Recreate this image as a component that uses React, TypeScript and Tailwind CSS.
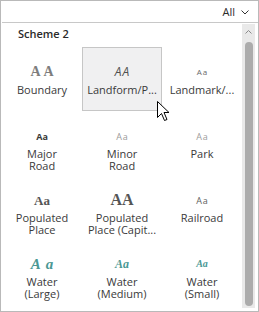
import React from "react";

type Item = {
  sample: string;
  cls: string;
  label: string[];
  hl?: boolean;
};

const serif = "font-['Liberation_Serif',serif]";
const sans = "font-['Open_Sans',sans-serif]";

const items: Item[] = [
  { sample: "AA", cls: `${serif} font-bold text-[14px] text-[#7d7d7d] tracking-[3px] pl-[3px]`, label: ["Boundary"] },
  { sample: "AA", cls: `${sans} italic text-[12px] text-[#505050] tracking-[1px] pl-[1px]`, label: ["Landform/P..."], hl: true },
  { sample: "Aa", cls: `${sans} text-[8px] text-[#6a6a6a] tracking-[1px] pl-[1px]`, label: ["Landmark/..."] },
  { sample: "Aa", cls: `${sans} font-bold text-[9px] text-[#3a3a3a]`, label: ["Major", "Road"] },
  { sample: "Aa", cls: `${sans} text-[9px] text-[#9a9a9a] tracking-[1px] pl-[1px]`, label: ["Minor", "Road"] },
  { sample: "Aa", cls: `${sans} text-[9px] text-[#9c9c9c] tracking-[1px] pl-[1px]`, label: ["Park"] },
  { sample: "Aa", cls: `${serif} font-bold text-[13px] text-[#555555]`, label: ["Populated", "Place"] },
  { sample: "AA", cls: `${serif} font-bold text-[16px] text-[#555555]`, label: ["Populated", "Place (Capit..."] },
  { sample: "Aa", cls: `${sans} text-[9px] text-[#5e5e5e] tracking-[1px] pl-[1px]`, label: ["Railroad"] },
  { sample: "A a", cls: `${serif} font-bold italic text-[15px] text-[#4a9894] tracking-[1px] pl-[1px]`, label: ["Water", "(Large)"] },
  { sample: "Aa", cls: `${serif} font-bold italic text-[12px] text-[#4a9894]`, label: ["Water", "(Medium)"] },
  { sample: "Aa", cls: `${serif} font-bold italic text-[10px] text-[#4a9894]`, label: ["Water", "(Small)"] },
];

function Cell({ item }: { item: Item }) {
  return (
    <div
      className={
        "h-[64px] flex flex-col items-center " +
        (item.hl
          ? "bg-[#f0f0f1] border border-[#c6c6c6] pt-[15px] h-[63px]"
          : "pt-[16px]")
      }
    >
      <div className="h-[18px] flex items-center justify-center leading-none">
        <span className={item.cls + " whitespace-pre"}>{item.sample}</span>
      </div>
      <div className="mt-[3px] text-center text-[11px] leading-[12px] text-[#3a3a3a] font-['Open_Sans',sans-serif] whitespace-nowrap">
        {item.label.map((l, i) => (
          <div key={i}>{l}</div>
        ))}
      </div>
    </div>
  );
}

export default function App() {
  return (
    <div className="relative w-[259px] h-[312px] bg-white border border-[#b9b9b9] overflow-hidden font-['Open_Sans',sans-serif]">
      {/* top bar */}
      <div className="h-[22px] ml-[1px] border-b border-[#c8c8c8] flex items-center justify-end pr-[9px]">
        <span className="text-[11px] text-[#2b2b2b] leading-none">All</span>
        <svg width="8" height="5" viewBox="0 0 8 5" className="ml-[6px] mt-[1px]">
          <path d="M0.5 0.5 L4 4 L7.5 0.5" fill="none" stroke="#333" strokeWidth="1" />
        </svg>
      </div>
      <div className="flex h-[287px]">
        {/* content */}
        <div className="flex-1 pl-[1px]">
          <div className="pt-[4px] pl-[16px] h-[24px] text-[11px] leading-[14px] font-semibold text-[#2a2a2a]">
            Scheme 2
          </div>
          <div className="grid grid-cols-3 w-[240px]">
            {items.map((it, i) => (
              <Cell key={i} item={it} />
            ))}
          </div>
        </div>
        {/* scrollbar */}
        <div className="w-[13px] mt-[1px] mb-[2px] mr-[3px] bg-[#e9e9e9] flex flex-col items-center">
          <svg width="7" height="4" viewBox="0 0 7 4" className="mt-[6px]">
            <path d="M0.5 3.5 L3.5 0.5 L6.5 3.5" fill="none" stroke="#8a8a8a" strokeWidth="1" />
          </svg>
          <div className="mt-[8px] w-[8px] flex-1 mb-[2px] rounded-full bg-[#acacac]" />
        </div>
      </div>
      {/* mouse cursor */}
      <svg
        width="13"
        height="21"
        viewBox="0 0 13 21"
        className="absolute left-[156px] top-[100px]"
      >
        <path
          d="M0.5 0.5 L0.5 16.5 L4.5 12.5 L7.5 19.5 L10 18.5 L7 11.5 L12 11.5 Z"
          fill="#fff"
          stroke="#000"
          strokeWidth="1"
          strokeLinejoin="miter"
        />
      </svg>
    </div>
  );
}
